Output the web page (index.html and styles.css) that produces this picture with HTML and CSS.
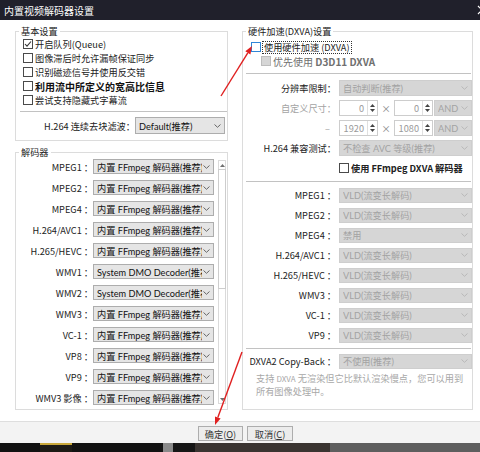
FILE: index.html
```html
<!DOCTYPE html>
<html lang="zh-CN">
<head>
<meta charset="utf-8">
<title>内置视频解码器设置</title>
<link rel="stylesheet" href="styles.css">
</head>
<body>
<div class="window">
  <div class="titlebar">
    <span class="title">内置视频解码器设置</span>
    <svg class="close" width="4" height="20" viewBox="0 0 4 20"><path d="M2 6 L10 14 M2 14 L10 6" stroke="#fff" stroke-width="1.2" fill="none"/></svg>
  </div>

  <div class="body">
    <div class="columns">
      <div class="leftcol">
        <fieldset class="group g-basic">
          <legend>基本设置</legend>
          <div class="checks">
            <div class="chk"><span class="box"><svg width="8" height="8" viewBox="0 0 8 8"><path d="M1 4 L3 6.2 L7 1.5" stroke="#333" stroke-width="1.1" fill="none"/></svg></span><span>开启队列(Queue)</span></div>
            <div class="chk"><span class="box"></span><span>图像滞后时允许漏帧保证同步</span></div>
            <div class="chk"><span class="box"></span><span>识别磁迹信号并使用反交错</span></div>
            <div class="chk strong"><span class="box"></span><span>利用流中所定义的宽高比信息</span></div>
            <div class="chk"><span class="box"></span><span>尝试支持隐藏式字幕流</span></div>
          </div>
          <div class="sep sep-basic"></div>
          <div class="deblock">
            <span class="lbl">H.264 连续去块滤波：</span>
            <div class="sel sel-deblock"><span class="txt">Default(推荐)</span><span class="arr"><svg width="7" height="4" viewBox="0 0 7 4"><path d="M0.5 0.5 L3.5 3.3 L6.5 0.5" stroke="#666" fill="none"/></svg></span></div>
          </div>
        </fieldset>

        <fieldset class="group g-dec">
          <legend>解码器</legend>
          <div class="dec-wrap">
            <div class="dec-list">
              <div class="drow"><span class="lbl">MPEG1 ：</span><div class="sel"><span class="txt">内置 FFmpeg 解码器(推荐)</span><span class="arr"><svg width="7" height="4" viewBox="0 0 7 4"><path d="M0.5 0.5 L3.5 3.3 L6.5 0.5" stroke="#666" fill="none"/></svg></span></div></div>
              <div class="drow"><span class="lbl">MPEG2 ：</span><div class="sel"><span class="txt">内置 FFmpeg 解码器(推荐)</span><span class="arr"><svg width="7" height="4" viewBox="0 0 7 4"><path d="M0.5 0.5 L3.5 3.3 L6.5 0.5" stroke="#666" fill="none"/></svg></span></div></div>
              <div class="drow"><span class="lbl">MPEG4 ：</span><div class="sel"><span class="txt">内置 FFmpeg 解码器(推荐)</span><span class="arr"><svg width="7" height="4" viewBox="0 0 7 4"><path d="M0.5 0.5 L3.5 3.3 L6.5 0.5" stroke="#666" fill="none"/></svg></span></div></div>
              <div class="drow"><span class="lbl">H.264/AVC1 ：</span><div class="sel"><span class="txt">内置 FFmpeg 解码器(推荐)</span><span class="arr"><svg width="7" height="4" viewBox="0 0 7 4"><path d="M0.5 0.5 L3.5 3.3 L6.5 0.5" stroke="#666" fill="none"/></svg></span></div></div>
              <div class="drow"><span class="lbl">H.265/HEVC ：</span><div class="sel"><span class="txt">内置 FFmpeg 解码器(推荐)</span><span class="arr"><svg width="7" height="4" viewBox="0 0 7 4"><path d="M0.5 0.5 L3.5 3.3 L6.5 0.5" stroke="#666" fill="none"/></svg></span></div></div>
              <div class="drow"><span class="lbl">WMV1 ：</span><div class="sel"><span class="txt">System DMO Decoder(推荐)</span><span class="arr"><svg width="7" height="4" viewBox="0 0 7 4"><path d="M0.5 0.5 L3.5 3.3 L6.5 0.5" stroke="#666" fill="none"/></svg></span></div></div>
              <div class="drow"><span class="lbl">WMV2 ：</span><div class="sel"><span class="txt">System DMO Decoder(推荐)</span><span class="arr"><svg width="7" height="4" viewBox="0 0 7 4"><path d="M0.5 0.5 L3.5 3.3 L6.5 0.5" stroke="#666" fill="none"/></svg></span></div></div>
              <div class="drow"><span class="lbl">WMV3 ：</span><div class="sel"><span class="txt">内置 FFmpeg 解码器(推荐)</span><span class="arr"><svg width="7" height="4" viewBox="0 0 7 4"><path d="M0.5 0.5 L3.5 3.3 L6.5 0.5" stroke="#666" fill="none"/></svg></span></div></div>
              <div class="drow"><span class="lbl">VC-1 ：</span><div class="sel"><span class="txt">内置 FFmpeg 解码器(推荐)</span><span class="arr"><svg width="7" height="4" viewBox="0 0 7 4"><path d="M0.5 0.5 L3.5 3.3 L6.5 0.5" stroke="#666" fill="none"/></svg></span></div></div>
              <div class="drow"><span class="lbl">VP8 ：</span><div class="sel"><span class="txt">内置 FFmpeg 解码器(推荐)</span><span class="arr"><svg width="7" height="4" viewBox="0 0 7 4"><path d="M0.5 0.5 L3.5 3.3 L6.5 0.5" stroke="#666" fill="none"/></svg></span></div></div>
              <div class="drow"><span class="lbl">VP9 ：</span><div class="sel"><span class="txt">内置 FFmpeg 解码器(推荐)</span><span class="arr"><svg width="7" height="4" viewBox="0 0 7 4"><path d="M0.5 0.5 L3.5 3.3 L6.5 0.5" stroke="#666" fill="none"/></svg></span></div></div>
              <div class="drow"><span class="lbl">WMV3 影像 ：</span><div class="sel"><span class="txt">内置 FFmpeg 解码器(推荐)</span><span class="arr"><svg width="7" height="4" viewBox="0 0 7 4"><path d="M0.5 0.5 L3.5 3.3 L6.5 0.5" stroke="#666" fill="none"/></svg></span></div></div>
            </div>
            <div class="scrollbar">
              <div class="sb-arrow"><svg width="5" height="3" viewBox="0 0 5 3"><path d="M0 3 L2.5 0 L5 3 Z" fill="#707070"/></svg></div>
              <div class="sb-thumb"></div>
              <div class="sb-track"></div>
              <div class="sb-arrow"><svg width="5" height="3" viewBox="0 0 5 3"><path d="M0 0 L2.5 3 L5 0 Z" fill="#707070"/></svg></div>
            </div>
          </div>
        </fieldset>
      </div>

      <fieldset class="group g-hw">
        <legend>硬件加速(DXVA)设置</legend>
        <div class="chk chk-a"><span class="box hover"></span><span class="focus">使用硬件加速 (DXVA)</span></div>
        <div class="chk chk-b"><span class="box disabled"></span><span>优先使用 <b>D3D11 DXVA</b></span></div>
        <div class="sep sep-hw"></div>

        <div class="form-top">
          <div class="frow">
            <span class="lbl">分辨率限制：</span>
            <div class="sel dis tall"><span class="txt">自动判断(推荐)</span><span class="arr"><svg width="7" height="4" viewBox="0 0 7 4"><path d="M0.5 0.5 L3.5 3.3 L6.5 0.5" stroke="#b8b8b8" fill="none"/></svg></span></div>
          </div>
          <div class="frow">
            <span class="lbl muted">自定义尺寸：</span>
            <div class="sizes">
              <div class="spin"><span class="v">0</span><span class="btns"><svg width="5" height="3" viewBox="0 0 5 3"><path d="M0 3 L2.5 0 L5 3 Z" fill="#444"/></svg><svg width="5" height="3" viewBox="0 0 5 3"><path d="M0 0 L2.5 3 L5 0 Z" fill="#444"/></svg></span></div>
              <span class="times">×</span>
              <div class="spin"><span class="v">0</span><span class="btns"><svg width="5" height="3" viewBox="0 0 5 3"><path d="M0 3 L2.5 0 L5 3 Z" fill="#444"/></svg><svg width="5" height="3" viewBox="0 0 5 3"><path d="M0 0 L2.5 3 L5 0 Z" fill="#444"/></svg></span></div>
              <div class="sel dis tall and"><span class="txt">AND</span><span class="arr"><svg width="7" height="4" viewBox="0 0 7 4"><path d="M0.5 0.5 L3.5 3.3 L6.5 0.5" stroke="#b8b8b8" fill="none"/></svg></span></div>
            </div>
          </div>
          <div class="frow">
            <span class="lbl muted dash">–</span>
            <div class="sizes">
              <div class="spin"><span class="v">1920</span><span class="btns"><svg width="5" height="3" viewBox="0 0 5 3"><path d="M0 3 L2.5 0 L5 3 Z" fill="#444"/></svg><svg width="5" height="3" viewBox="0 0 5 3"><path d="M0 0 L2.5 3 L5 0 Z" fill="#444"/></svg></span></div>
              <span class="times">×</span>
              <div class="spin"><span class="v">1080</span><span class="btns"><svg width="5" height="3" viewBox="0 0 5 3"><path d="M0 3 L2.5 0 L5 3 Z" fill="#444"/></svg><svg width="5" height="3" viewBox="0 0 5 3"><path d="M0 0 L2.5 3 L5 0 Z" fill="#444"/></svg></span></div>
              <div class="sel dis tall and"><span class="txt">AND</span><span class="arr"><svg width="7" height="4" viewBox="0 0 7 4"><path d="M0.5 0.5 L3.5 3.3 L6.5 0.5" stroke="#b8b8b8" fill="none"/></svg></span></div>
            </div>
          </div>
          <div class="frow">
            <span class="lbl">H.264 兼容测试：</span>
            <div class="sel dis tall"><span class="txt">不检查 AVC 等级(推荐)</span><span class="arr"><svg width="7" height="4" viewBox="0 0 7 4"><path d="M0.5 0.5 L3.5 3.3 L6.5 0.5" stroke="#b8b8b8" fill="none"/></svg></span></div>
          </div>
          <div class="frow">
            <span class="lbl"></span>
            <div class="chk chk-ff"><span class="box"></span><span>使用 FFmpeg DXVA 解码器</span></div>
          </div>
        </div>

        <div class="sep sep-hw2"></div>

        <div class="form-dec">
          <div class="frow"><span class="lbl">MPEG1 ：</span><div class="sel dis"><span class="txt">VLD(流变长解码)</span><span class="arr"><svg width="7" height="4" viewBox="0 0 7 4"><path d="M0.5 0.5 L3.5 3.3 L6.5 0.5" stroke="#b8b8b8" fill="none"/></svg></span></div></div>
          <div class="frow"><span class="lbl">MPEG2 ：</span><div class="sel dis"><span class="txt">VLD(流变长解码)</span><span class="arr"><svg width="7" height="4" viewBox="0 0 7 4"><path d="M0.5 0.5 L3.5 3.3 L6.5 0.5" stroke="#b8b8b8" fill="none"/></svg></span></div></div>
          <div class="frow"><span class="lbl">MPEG4 ：</span><div class="sel dis"><span class="txt">禁用</span><span class="arr"><svg width="7" height="4" viewBox="0 0 7 4"><path d="M0.5 0.5 L3.5 3.3 L6.5 0.5" stroke="#b8b8b8" fill="none"/></svg></span></div></div>
          <div class="frow"><span class="lbl">H.264/AVC1 ：</span><div class="sel dis"><span class="txt">VLD(流变长解码)</span><span class="arr"><svg width="7" height="4" viewBox="0 0 7 4"><path d="M0.5 0.5 L3.5 3.3 L6.5 0.5" stroke="#b8b8b8" fill="none"/></svg></span></div></div>
          <div class="frow"><span class="lbl">H.265/HEVC ：</span><div class="sel dis"><span class="txt">VLD(流变长解码)</span><span class="arr"><svg width="7" height="4" viewBox="0 0 7 4"><path d="M0.5 0.5 L3.5 3.3 L6.5 0.5" stroke="#b8b8b8" fill="none"/></svg></span></div></div>
          <div class="frow"><span class="lbl">WMV3 ：</span><div class="sel dis"><span class="txt">VLD(流变长解码)</span><span class="arr"><svg width="7" height="4" viewBox="0 0 7 4"><path d="M0.5 0.5 L3.5 3.3 L6.5 0.5" stroke="#b8b8b8" fill="none"/></svg></span></div></div>
          <div class="frow"><span class="lbl">VC-1 ：</span><div class="sel dis"><span class="txt">VLD(流变长解码)</span><span class="arr"><svg width="7" height="4" viewBox="0 0 7 4"><path d="M0.5 0.5 L3.5 3.3 L6.5 0.5" stroke="#b8b8b8" fill="none"/></svg></span></div></div>
          <div class="frow"><span class="lbl">VP9 ：</span><div class="sel dis"><span class="txt">VLD(流变长解码)</span><span class="arr"><svg width="7" height="4" viewBox="0 0 7 4"><path d="M0.5 0.5 L3.5 3.3 L6.5 0.5" stroke="#b8b8b8" fill="none"/></svg></span></div></div>
        </div>

        <div class="sep sep-hw3"></div>

        <div class="frow copyback"><span class="lbl">DXVA2 Copy-Back ：</span><div class="sel dis"><span class="txt">不使用(推荐)</span><span class="arr"><svg width="7" height="4" viewBox="0 0 7 4"><path d="M0.5 0.5 L3.5 3.3 L6.5 0.5" stroke="#b8b8b8" fill="none"/></svg></span></div></div>
        <p class="desc">支持 <span class="small">DXVA</span> 无渲染但它比默认渲染慢点，您可以用到<br>所有图像处理中。</p>
      </fieldset>
    </div>

    <div class="footer">
      <button class="btn">确定(<u>O</u>)</button>
      <button class="btn">取消(<u>C</u>)</button>
    </div>
  </div>

  <div class="taskbar">
    <span class="seg s1"></span>
    <span class="seg s2"></span>
    <span class="seg s3"></span>
    <span class="seg s4"></span>
    <span class="seg s5"></span>
    <span class="seg s6"></span>
    <span class="seg s7"></span>
  </div>

  <svg class="arrows" width="480" height="452" viewBox="0 0 480 452">
    <line x1="221" y1="96" x2="247.8" y2="52.8" stroke="#e02020" stroke-width="1.4"/>
    <polygon points="252,46 250.4,54.4 245.3,51.2" fill="#e02020"/>
    <line x1="242" y1="352" x2="217.8" y2="417.5" stroke="#e02020" stroke-width="1.4"/>
    <polygon points="215,425 220.6,418.6 215,416.4" fill="#e02020"/>
  </svg>
</div>
</body>
</html>
```

FILE: styles.css
```css
* {
  box-sizing: border-box;
}

html,
body {
  margin: 0;
  padding: 0;
}

body {
  width: 480px;
  height: 452px;
  overflow: hidden;
  background: #ffffff;
  font-family: "Noto Sans CJK SC", "Noto Sans", sans-serif;
  font-size: 9.2px;
  color: #222222;
}

.window {
  position: relative;
  width: 480px;
  height: 452px;
  display: flex;
  flex-direction: column;
}

/* title bar */
.titlebar {
  height: 20px;
  flex: none;
  background: #20202b;
  color: #ffffff;
  display: flex;
  align-items: center;
  justify-content: space-between;
  padding-left: 4px;
  font-size: 10px;
}

.close {
  display: block;
}

/* dialog body */
.body {
  flex: 1;
  display: flex;
  flex-direction: column;
  background: #ffffff;
}

.columns {
  display: grid;
  grid-template-columns: 213px 231px;
  column-gap: 14px;
  padding: 5px 0 0 15px;
}

.leftcol {
  display: flex;
  flex-direction: column;
  gap: 5px;
}

.group {
  margin: 0;
  border: 1px solid #dcdcdc;
  min-width: 0;
}

.group legend {
  padding: 0 2px;
  line-height: 12px;
  font-size: 9.2px;
  color: #222222;
}

.g-basic {
  padding: 0 2px 6px 3px;
}

.g-dec {
  padding: 0 1px 1px 3px;
}

.g-hw {
  padding: 0 0 0 3px;
}

/* checkboxes */
.checks {
  padding-left: 4px;
}

.chk {
  display: flex;
  align-items: center;
  gap: 2px;
  height: 14px;
  white-space: nowrap;
}

.chk.strong {
  font-weight: bold;
  font-size: 10px;
  color: #111111;
}

.box {
  width: 10px;
  height: 10px;
  flex: none;
  border: 1px solid #4a4a4a;
  background: #ffffff;
  display: flex;
  align-items: center;
  justify-content: center;
}

.box.hover {
  border-color: #2f86d8;
}

.box.disabled {
  border-color: #bdbdbd;
  background: #d6d6d6;
}

.focus {
  border: 1px dotted #333333;
  padding: 0 1px;
  line-height: 11px;
}

/* separators */
.sep {
  height: 1px;
  background: #c2c2c2;
}

.sep-basic {
  margin: 4px -2px 0 1px;
}

.sep-hw {
  margin: 5px 1px 0 0;
}

.sep-hw2 {
  margin: 3px 1px 0 0;
}

.sep-hw3 {
  margin: 3px 1px 0 0;
}

/* labels */
.lbl {
  text-align: right;
  white-space: nowrap;
}

.muted {
  color: #a3a3a3;
}

.dash {
  padding-right: 6px;
}

/* fake select */
.sel {
  display: flex;
  align-items: center;
  height: 15px;
  border: 1px solid #adadad;
  background: #e5e5e5;
  color: #111111;
  padding-left: 3px;
  overflow: hidden;
  min-width: 0;
  font-family: "Lato", "Noto Sans CJK SC", sans-serif;
  font-size: 9.2px;
}

.sel .txt {
  flex: 1;
  min-width: 0;
  overflow: hidden;
  white-space: nowrap;
}

.sel .arr {
  flex: none;
  width: 11px;
  display: flex;
  justify-content: center;
  align-items: center;
  padding-right: 2px;
}

.sel .arr svg {
  display: block;
}

.sel.dis {
  background: #d6d6d6;
  border-color: #cecece;
  color: #a3a3a3;
}

.sel.tall {
  height: 16px;
}

.sel-deblock {
  width: 90px;
  height: 17px;
}

.deblock {
  display: flex;
  justify-content: flex-end;
  align-items: center;
  margin-top: 5px;
  height: 17px;
}

/* decoder list */
.dec-wrap {
  display: flex;
  margin-top: -2px;
}

.dec-list {
  width: 195px;
  flex: none;
}

.drow {
  display: grid;
  grid-template-columns: 74px 121px;
  height: 21px;
  align-items: center;
}

.scrollbar {
  margin: 4px 0 0 4px;
  width: 8px;
  height: 244px;
  border: 1px solid #dadada;
  display: flex;
  flex-direction: column;
  background: #ffffff;
}

.sb-arrow {
  height: 8px;
  flex: none;
  display: flex;
  align-items: center;
  justify-content: center;
}

.sb-arrow svg {
  display: block;
}

.sb-thumb {
  height: 120px;
  flex: none;
  border: 1px solid #cdcdcd;
  margin: 0 -1px;
  background: #ffffff;
}

.sb-track {
  flex: 1;
}

/* hardware panel */
.chk-a {
  margin-top: 3px;
  padding-left: 5px;
  gap: 1px;
}

.chk-b {
  padding-left: 15px;
  color: #707070;
  font-size: 10px;
}

.chk-b b {
  font-weight: bold;
}

.form-top {
  margin-top: 4px;
}

.form-dec {
  margin-top: 3px;
}

.frow {
  display: grid;
  grid-template-columns: 90px 133px;
  column-gap: 3px;
  height: 20px;
  align-items: center;
}

.sizes {
  display: flex;
  align-items: center;
}

.spin {
  width: 39px;
  height: 16px;
  flex: none;
  display: flex;
  border: 1px solid #cdcdcd;
  background: #ffffff;
}

.spin .v {
  flex: 1;
  text-align: right;
  padding-right: 3px;
  line-height: 14px;
  color: #9a9a9a;
}

.spin .btns {
  width: 10px;
  flex: none;
  border-left: 1px solid #e0e0e0;
  display: flex;
  flex-direction: column;
  justify-content: space-evenly;
  align-items: center;
}

.spin .btns svg {
  display: block;
}

.times {
  width: 16px;
  flex: none;
  text-align: center;
  color: #8a8a8a;
}

.and {
  width: 38px;
  flex: none;
  margin-left: 1px;
}

.chk-ff {
  font-weight: bold;
  color: #222222;
}

.copyback {
  margin-top: 2px;
}

.desc {
  margin: 1px 0 0 0;
  padding-left: 10px;
  line-height: 12px;
  color: #a8a8a8;
  white-space: nowrap;
}

.desc .small {
  font-size: 8px;
}

/* footer buttons */
.footer {
  flex: 1;
  margin-top: 11px;
  border-top: 1px solid #dedede;
  background: #f3f3f3;
  display: flex;
  justify-content: flex-start;
  gap: 4px;
  padding: 4px 0 0 198px;
}

.btn {
  width: 45px;
  height: 15px;
  margin: 0;
  padding: 0;
  border: 1px solid #adadad;
  background: #ececec;
  font: inherit;
  color: #333333;
  line-height: 12px;
}

.btn + .btn {
  width: 46px;
}

/* strip of the window behind the dialog */
.taskbar {
  height: 9px;
  flex: none;
  display: flex;
  background: #121212;
}

.seg {
  height: 100%;
  flex: none;
}

.s1 {
  width: 40px;
  background: #121212;
}

.s2 {
  width: 32px;
  background: #1c1a14;
  border-top: 2px solid #c9a83a;
}

.s3 {
  width: 91px;
  background: #121212;
}

.s4 {
  width: 10px;
  background: #8a8a8a;
}

.s5 {
  width: 22px;
  background: #161616;
}

.s6 {
  width: 135px;
  background: #3a3431;
}

.s7 {
  flex: 1;
  background: #5e5e5e;
}

/* annotation arrows drawn over the screenshot */
.arrows {
  position: absolute;
  left: 0;
  top: 0;
  pointer-events: none;
}
```
